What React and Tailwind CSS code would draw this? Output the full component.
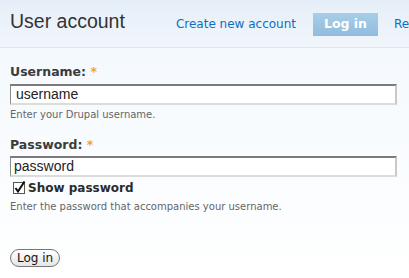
export default function App() {
  const verdana = { fontFamily: '"DejaVu Sans", Verdana, sans-serif' };
  return (
    <div className="w-[409px] h-[278px] overflow-hidden bg-white" style={{ fontFamily: '"Liberation Sans", Arial, sans-serif' }}>
      <div className="h-[48px] flex items-center bg-gradient-to-b from-[#e5eef8] to-[#f1f6fb] border-b border-[#dfe6ec] whitespace-nowrap">
        <h1 className="ml-[10px] text-[19.5px] leading-none text-[#333] mt-[-4px]">User account</h1>
        <div className="ml-[51px] flex items-center text-[#0a6fc4] mt-[1px]" style={verdana}>
          <span className="text-[12px]">Create new account</span>
          <span className="ml-[17px] w-[65px] h-[23px] flex items-center justify-center bg-gradient-to-b from-[#a9cde6] to-[#8fbcde] text-white font-bold text-[12.5px]">Log in</span>
          <span className="ml-[16px] text-[12px]">Re</span>
        </div>
      </div>
      <div className="bg-gradient-to-b from-[#f4f9fd] to-white h-[230px] px-[10px] pt-[16px]">
        <label className="block text-[12.5px] font-bold text-[#3b3b3b] leading-[16px]" style={verdana}>
          Username: <span className="text-[#f5a21b]">*</span>
        </label>
        <div className="mt-[4px] h-[21px] w-[387px] bg-white border-t-2 border-t-[#7a7a7a] border-l border-l-[#8a8a8a] border-r-2 border-r-[#c8c8c8] border-b-2 border-b-[#dcdcdc] flex items-center pl-[5px] text-[14px] text-[#222]">
          username
        </div>
        <div className="mt-[4px] text-[10px] text-[#666] leading-[12px]" style={verdana}>Enter your Drupal username.</div>
        <label className="block mt-[16px] text-[12.5px] font-bold text-[#3b3b3b] leading-[16px]" style={verdana}>
          Password: <span className="text-[#f5a21b]">*</span>
        </label>
        <div className="mt-[3px] h-[21px] w-[387px] bg-white border-t-2 border-t-[#7a7a7a] border-l border-l-[#8a8a8a] border-r-2 border-r-[#c8c8c8] border-b-2 border-b-[#dcdcdc] flex items-center pl-[3px] text-[14px] text-[#222]">
          password
        </div>
        <div className="mt-[2px] flex items-center">
          <svg width="13" height="14" viewBox="0 0 13 14" className="ml-[3px]">
            <rect x="0.5" y="1.5" width="11" height="11" fill="#fff" stroke="#555" />
            <path d="M2.5 7 L5 10.5 L11.5 0.5" fill="none" stroke="#111" strokeWidth="2" />
          </svg>
          <span className="ml-[2px] text-[12px] font-bold text-[#2b2b2b]" style={verdana}>Show password</span>
        </div>
        <div className="mt-[4px] text-[10px] text-[#666] leading-[12px]" style={verdana}>Enter the password that accompanies your username.</div>
        <button className="mt-[36px] h-[18px] w-[50px] rounded-full border border-[#777] bg-gradient-to-b from-white to-[#e6e6e6] text-[12px] text-[#111] leading-none flex items-center justify-center" style={verdana}>
          Log in
        </button>
      </div>
    </div>
  );
}
